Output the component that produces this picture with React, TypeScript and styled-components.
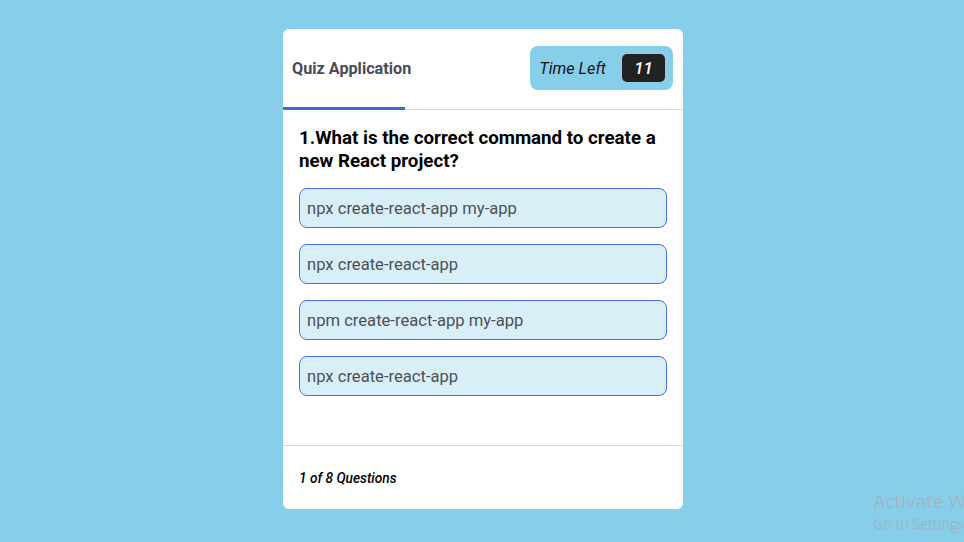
import React from "react";
import styled, { createGlobalStyle } from "styled-components";

const Global = createGlobalStyle`
  html, body { margin: 0; padding: 0; }
  body {
    background: #87ceeb;
    font-family: Roboto, "Liberation Sans", sans-serif;
    min-height: 542px;
    overflow: hidden;
  }
`;

const Page = styled.div`
  display: flex;
  justify-content: center;
  align-items: flex-start;
  padding-top: 29px;
  padding-left: 2px;
  min-height: 542px;
  box-sizing: border-box;
`;

const Card = styled.div`
  width: 400px;
  background: #fff;
  border-radius: 6px;
  overflow: hidden;
  display: flex;
  flex-direction: column;
`;

const Header = styled.header`
  position: relative;
  height: 81px;
  box-sizing: border-box;
  display: flex;
  align-items: center;
  justify-content: space-between;
  padding: 0 10px 2px 9px;
  border-bottom: 1px solid #dcdcdc;
`;

const Title = styled.h1`
  margin: 0;
  font-size: 16.2px;
  font-weight: 700;
  color: #4a4a58;
`;

const Timer = styled.div`
  display: flex;
  align-items: center;
  gap: 16px;
  height: 44px;
  box-sizing: border-box;
  padding: 0 8px 0 9px;
  background: #87ceeb;
  border-radius: 8px;
`;

const TimerLabel = styled.span`
  font-size: 16.2px;
  font-style: italic;
  color: #111;
`;

const TimerValue = styled.span`
  display: flex;
  align-items: center;
  justify-content: center;
  width: 43px;
  height: 28px;
  background: #222;
  color: #fff;
  border-radius: 5px;
  font-size: 17px;
  font-style: italic;
  font-weight: 500;
`;

const Progress = styled.div`
  position: absolute;
  left: 0;
  bottom: -1px;
  height: 3px;
  background: #3b6ae0;
`;

const Body = styled.main`
  padding: 17px 16px 0 16px;
  height: 336px;
  box-sizing: border-box;
  border-bottom: 1px solid #dcdcdc;
`;

const Question = styled.h2`
  margin: 0 0 15px 0;
  font-size: 18.72px;
  line-height: 23px;
  font-weight: 700;
  color: #000;
`;

const Options = styled.ul`
  list-style: none;
  margin: 0;
  padding: 0;
  display: flex;
  flex-direction: column;
  gap: 16px;
`;

const Option = styled.li`
  height: 40px;
  box-sizing: border-box;
  display: flex;
  align-items: center;
  padding-left: 7px;
  background: #d9eff8;
  border: 1px solid #4a6fe0;
  border-radius: 8px;
  font-size: 16.6px;
  color: #4f4f5a;
`;

const Footer = styled.footer`
  height: 63px;
  display: flex;
  align-items: center;
  padding: 0 16px;
`;

const Count = styled.span`
  font-size: 13.7px;
  font-style: italic;
  font-weight: 500;
  color: #000;
`;

const Watermark = styled.div`
  position: fixed;
  left: 873px;
  top: 489px;
  white-space: nowrap;
  color: #9db5c2;
  font-family: "Open Sans", "Noto Sans", sans-serif;
`;

const WmTitle = styled.div`
  font-size: 19px;
  line-height: 25px;
`;

const WmSub = styled.div`
  font-size: 14px;
  line-height: 20px;
`;

const options = [
  "npx create-react-app my-app",
  "npx create-react-app",
  "npm create-react-app my-app",
  "npx create-react-app",
];

export default function App() {
  return (
    <>
      <Global />
      <Page>
        <Card>
          <Header>
            <Title>Quiz Application</Title>
            <Timer>
              <TimerLabel>Time Left</TimerLabel>
              <TimerValue>11</TimerValue>
            </Timer>
            <Progress style={{ width: `${(122 / 400) * 100}%` }} />
          </Header>
          <Body>
            <Question>1.What is the correct command to create a new React project?</Question>
            <Options>
              {options.map((o, i) => (
                <Option key={i}>{o}</Option>
              ))}
            </Options>
          </Body>
          <Footer>
            <Count>1 of 8 Questions</Count>
          </Footer>
        </Card>
      </Page>
      <Watermark>
        <WmTitle>Activate Windows</WmTitle>
        <WmSub>Go to Settings to activate Windows.</WmSub>
      </Watermark>
    </>
  );
}
